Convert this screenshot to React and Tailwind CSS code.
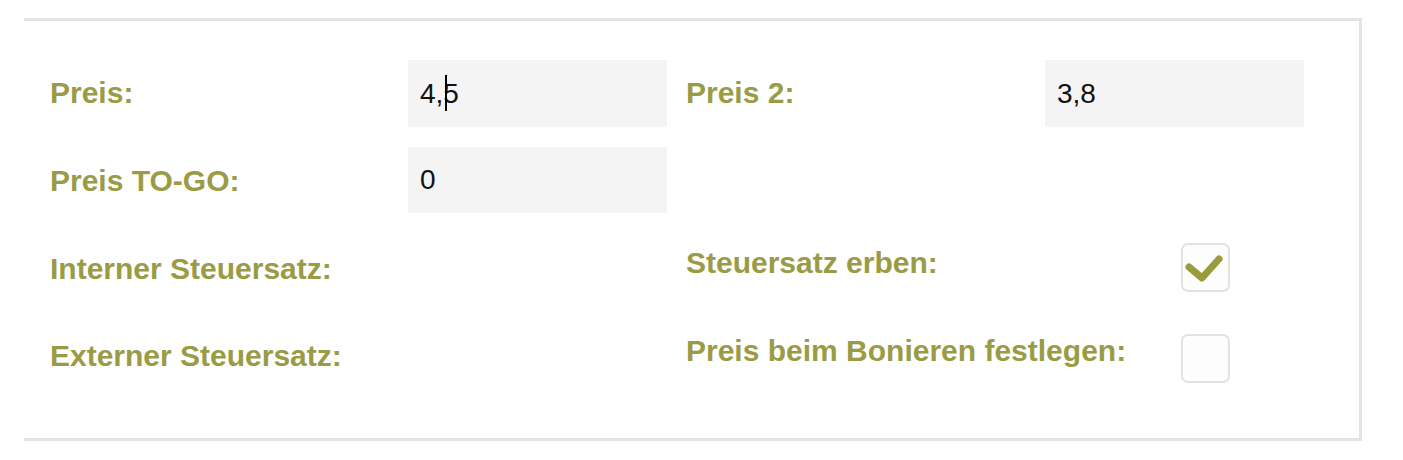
import React from 'react';

// Preis-Einstellungen panel (Artikel bearbeiten)
const FONT = { fontFamily: '"Liberation Sans", Arial, Helvetica, sans-serif' };

const Label = ({ children, className = '' }) => (
  <div className={'w-[358px] shrink-0 whitespace-nowrap text-[30px] font-bold leading-none text-[#9a9b45] ' + className}>
    {children}
  </div>
);

const TextField = ({ value, caretAfter = null, className = '' }) => {
  // caretAfter: index in value after which the blinking caret sits
  const before = caretAfter !== null ? value.slice(0, caretAfter) : value;
  const after = caretAfter !== null ? value.slice(caretAfter) : '';
  return (
    <div className={'w-[259px] shrink-0 bg-[#f4f4f4] flex items-center pl-[12px] text-[28px] leading-none text-[#111] ' + className}>
      <span>
        {before}
        {caretAfter !== null && (
          <span className="relative inline-block w-0 h-0">
            <span className="absolute left-[2px] top-[-28px] w-[2px] h-[36px] bg-black" />
          </span>
        )}
        {after}
      </span>
    </div>
  );
};

const Checkbox = ({ checked }) => (
  <div className="ml-[136px] w-[49px] h-[49px] rounded-[7px] border-2 border-[#e2e2e2] bg-[#fdfdfd] flex items-center justify-center">
    {checked && (
      <svg width="49" height="49" viewBox="0 0 49 49" className="-m-[2px]">
        <polyline
          points="8,24 21,35 38,16"
          fill="none"
          stroke="#9a9b3a"
          strokeWidth="7"
          strokeLinecap="round"
          strokeLinejoin="round"
        />
      </svg>
    )}
  </div>
);

const App = () => {
  return (
    <div className="min-h-[460px] bg-white pt-[18px] pl-[24px]" style={FONT}>
      <div className="w-[1338px] border-t-[3px] border-r-[3px] border-b-[3px] border-[#e4e4e4] pt-[39px] pb-[55px] pl-[26px]">
        {/* Row 1 */}
        <div className="flex items-start h-[67px]">
          <Label className="pt-[18px]">Preis:</Label>
          <TextField value="4,5" caretAfter={2} className="h-[67px]" />
          <div className="w-[19px] shrink-0" />
          <Label className="pt-[18px] w-[359px]">Preis 2:</Label>
          <TextField value="3,8" className="h-[67px]" />
        </div>

        {/* Row 2 */}
        <div className="flex items-start h-[66px] mt-[20px]">
          <Label className="pt-[19px]">Preis TO-GO:</Label>
          <TextField value="0" className="h-[66px]" />
        </div>

        {/* Row 3 */}
        <div className="flex items-start h-[49px] mt-[30px]">
          <Label className="pt-[11px] w-[636px]">Interner Steuersatz:</Label>
          <Label className="pt-[5px] w-[359px]">Steuersatz erben:</Label>
          <Checkbox checked />
        </div>

        {/* Row 4 */}
        <div className="flex items-start h-[49px] mt-[42px]">
          <Label className="pt-[7px] w-[636px]">Externer Steuersatz:</Label>
          <Label className="pt-[2px] w-[359px]">Preis beim Bonieren festlegen:</Label>
          <Checkbox checked={false} />
        </div>
      </div>
    </div>
  );
};

export default App;
